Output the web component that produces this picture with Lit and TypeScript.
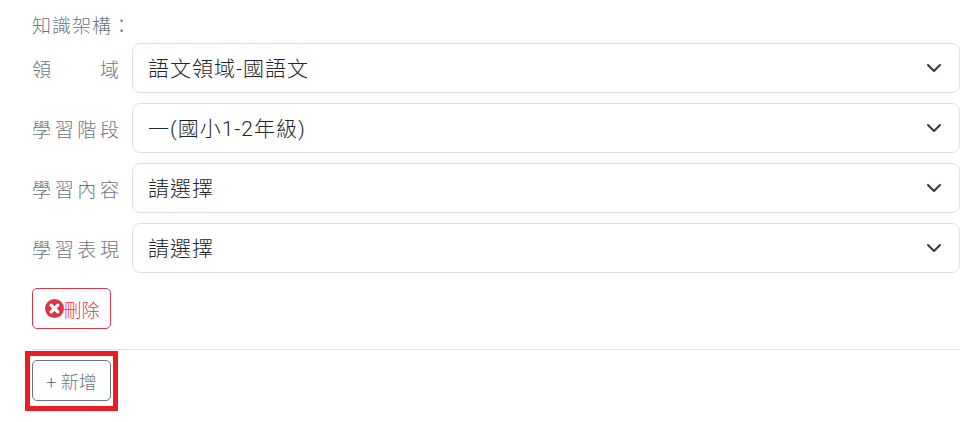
import { LitElement, html, css } from "lit";
import { customElement } from "lit/decorators.js";

const FONT = css`"Segoe UI", Roboto, "Noto Sans CJK TC", sans-serif`;

@customElement("app-root")
export class AppRoot extends LitElement {
  static styles = css`
    :host {
      display: block;
      width: 970px;
      height: 422px;
      overflow: hidden;
      background: #fff;
      font-family: ${FONT};
      box-sizing: border-box;
      padding: 13px 10px 0 32px;
    }
    .title {
      font-size: 19px;
      line-height: 27px;
      color: #6c757d;
      letter-spacing: 1px;
      height: 30px;
      font-weight: 300;
    }
    .rows { display: flex; flex-direction: column; gap: 10px; }
    .row { display: flex; align-items: center; }
    .label {
      width: 100px;
      flex: none;
      box-sizing: border-box;
      font-size: 19px;
      color: #6c757d;
      display: flex;
      justify-content: space-between;
      padding-right: 13px;
      margin-top: 1px;
      font-weight: 300;
    }
    .select {
      flex: 1;
      height: 50px;
      box-sizing: border-box;
      border: 1px solid #dee2e6;
      border-radius: 8px;
      padding: 0 17px 0 15px;
      font: inherit;
      font-size: 21px;
      font-weight: 300;
      letter-spacing: 1px;
      color: #212529;
      background: #fff;
      display: flex;
      align-items: center;
      justify-content: space-between;
    }
    .select span { margin-top: -2px; }
    .chev { width: 16px; height: 16px; flex: none; }
    .del {
      margin-top: 15px;
      width: 79px;
      height: 41px;
      box-sizing: border-box;
      border: 1px solid #dc3545;
      border-radius: 5px;
      background: #fff;
      color: #dc3545;
      font: inherit;
      font-size: 18px;
      font-weight: 300;
      padding: 0 0 0 1px;
      display: flex;
      align-items: center;
      justify-content: center;
    }
    .del svg { width: 19px; height: 19px; flex: none; }
    hr {
      border: 0;
      border-top: 1px solid #dee2e6;
      margin: 20px 0 0;
    }
    .add-wrap {
      margin: 1px 0 0 -7px;
      width: 93px;
      height: 60px;
      box-sizing: border-box;
      border: 5px solid #ed1c24;
      padding: 4px 0 0 2px;
    }
    .add {
      width: 79px;
      height: 41px;
      box-sizing: border-box;
      border: 1px solid #6c757d;
      border-radius: 5px;
      background: #fff;
      color: #6c757d;
      font: inherit;
      font-size: 18px;
      font-weight: 300;
      padding: 0;
    }
  `;

  private row(parts: string[], value: string) {
    return html`<div class="row">
      <div class="label">${parts.map((p) => html`<span>${p}</span>`)}</div>
      <div class="select">
        <span>${value}</span>
        <svg class="chev" viewBox="0 0 16 16" fill="none" stroke="#343a40" stroke-width="2" stroke-linecap="round" stroke-linejoin="round">
          <path d="m2 5 6 6 6-6" />
        </svg>
      </div>
    </div>`;
  }

  render() {
    return html`
      <div class="title">知識架構：</div>
      <div class="rows">
        ${this.row(["領", "域"], "語文領域-國語文")}
        ${this.row(["學", "習", "階", "段"], "一(國小1-2年級)")}
        ${this.row(["學", "習", "內", "容"], "請選擇")}
        ${this.row(["學", "習", "表", "現"], "請選擇")}
      </div>
      <button class="del">
        <svg viewBox="0 0 16 16">
          <circle cx="8" cy="8" r="8" fill="#dc3545" />
          <path d="m5.2 5.2 5.6 5.6m0-5.6-5.6 5.6" stroke="#fff" stroke-width="2.8" stroke-linecap="round" fill="none" />
        </svg>刪除
      </button>
      <hr />
      <div class="add-wrap"><button class="add">+ 新增</button></div>
    `;
  }
}
